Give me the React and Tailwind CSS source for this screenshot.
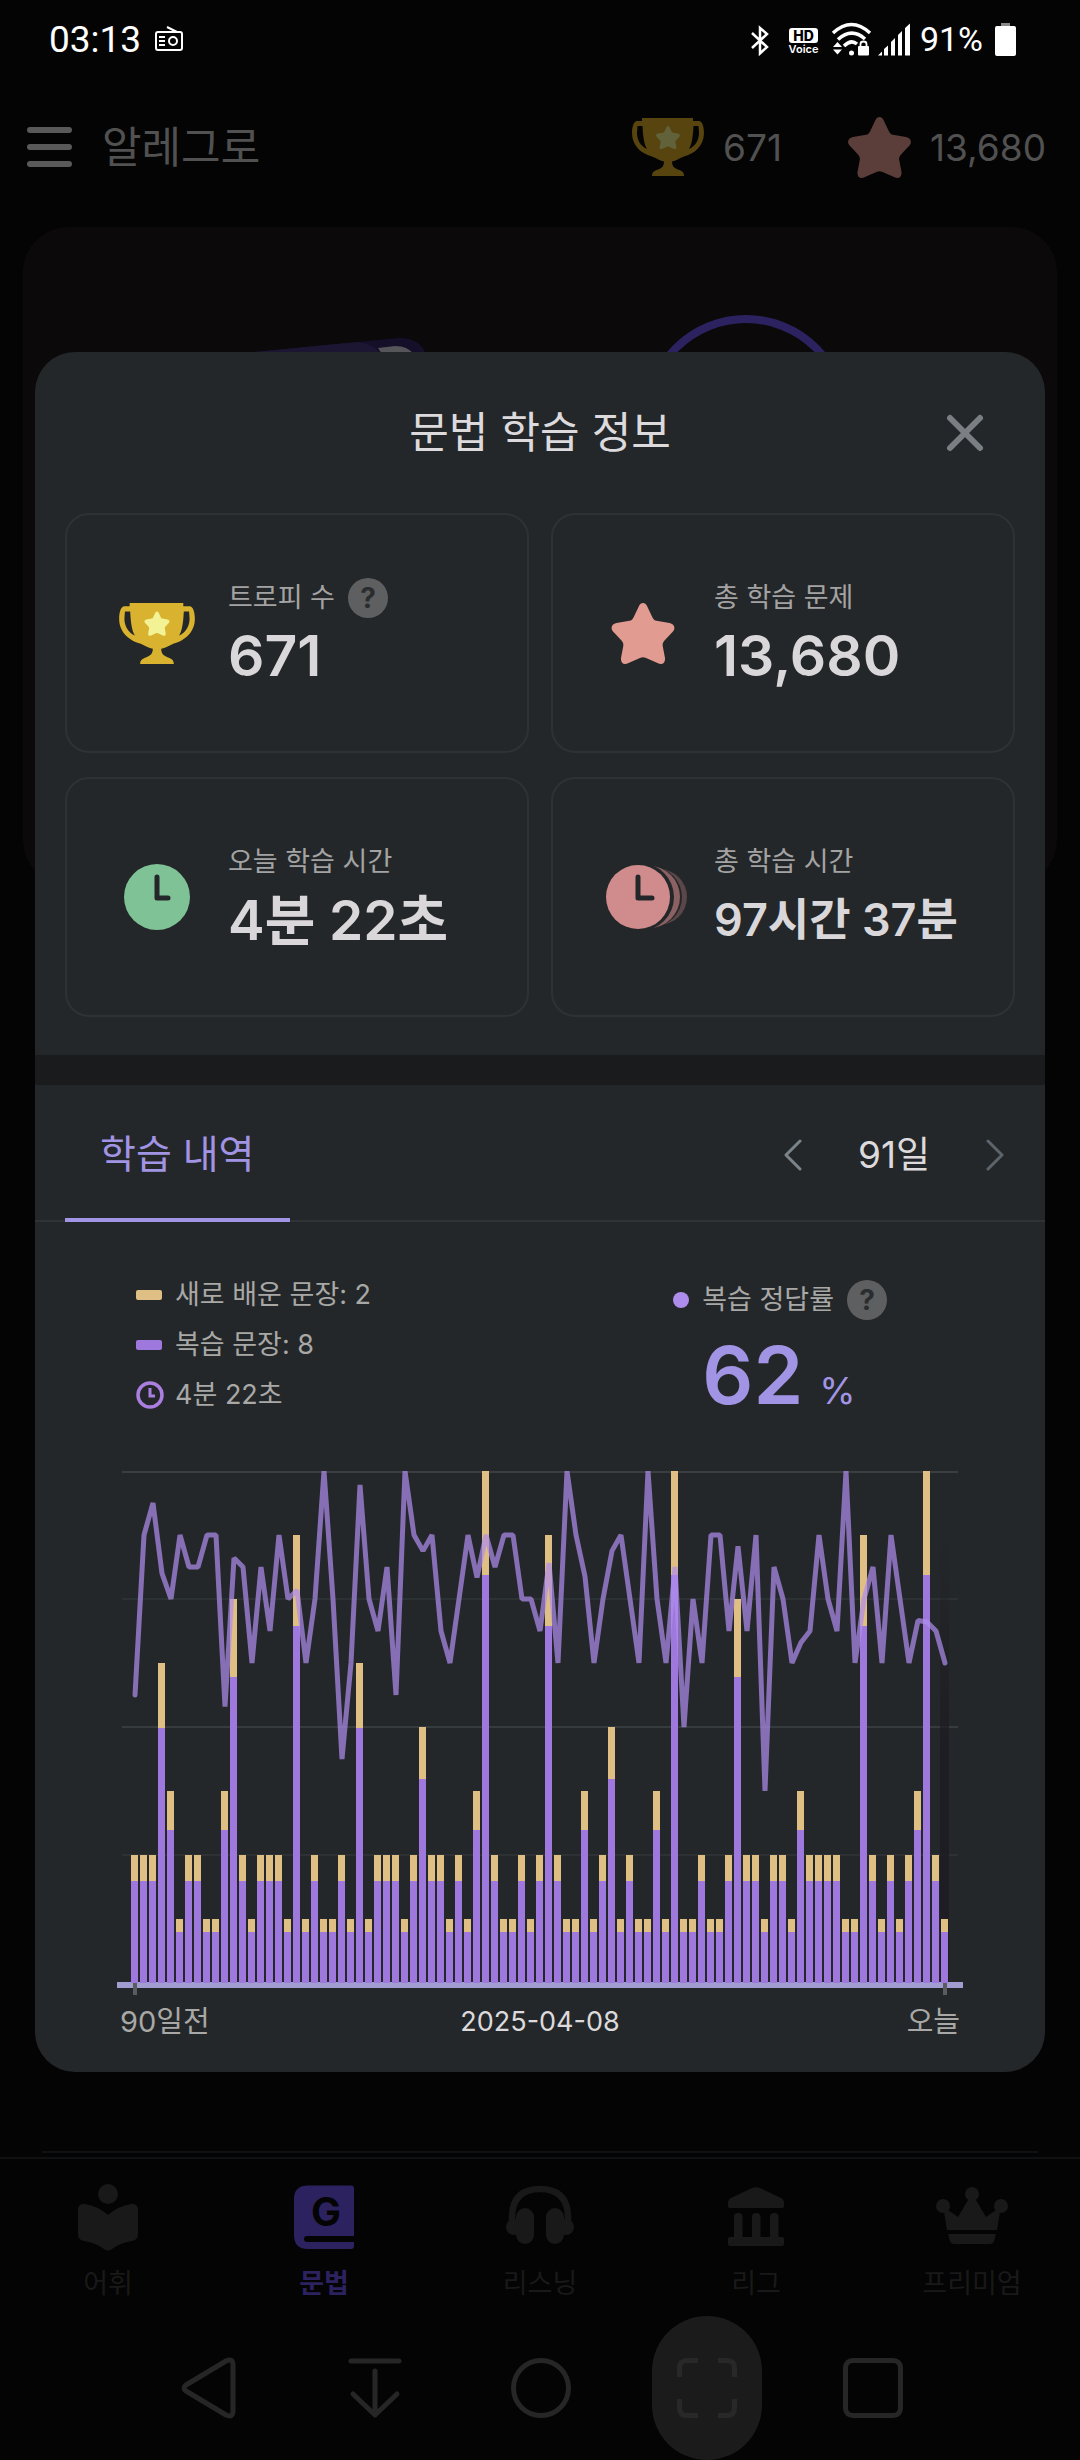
import React from "react";

const STAR =
  "M27.5 3C29 -1 34 -1 35.5 3L41 14.5C42 16.6 43 17.4 45 17.8L58 20C63 21 64.500 25.500 61 29L53 37.500C51.300 39.400 51 41 51.200 43L53.500 55C54 60 50.500 62.500 46 60L34 54.700C32 54 31 54 29 54.700L17 60C12.500 62.500 9 60 9.500 55L11.800 43C12 41 11.700 39.400 10 37.500L2 29C-1.500 25.500 0 21 5 20L18 17.800C20 17.400 21 16.600 22 14.500Z";

function Trophy({ className, color, star }) {
  return (
    <svg viewBox="0 0 72 58" className={className} aria-hidden="true">
      <path
        fill={color}
        fillRule="evenodd"
        d="M10 0H61V3H67C70 3 72 8 72 15C72 28 62 36 52 38.5C47 40.500 44 43 40 43.500C40 48 42 50 46 51.500C50 53 52 54 52 58H20C20 54 22 53 26 51.500C30 50 32 48 32 43.500C28 43 25 40.500 20 38.500C10 36 0 28 0 15C0 8 2 3 5 3H10Z M5.500 8H10.500C11 18 12 26 15 31C8 28 5 21 5 15Z M66.500 8H61.500C61 18 60 26 57 31C64 28 67 21 67 15Z"
      />
      <path fill={star} transform="translate(24 8) scale(.38)" d={STAR} />
    </svg>
  );
}

function Star({ className, color }) {
  return (
    <svg viewBox="0 0 63 61" className={className} aria-hidden="true">
      <path fill={color} d={STAR} />
    </svg>
  );
}

function TodayClock() {
  return (
    <svg viewBox="0 0 76 68" className="h-[68px] w-[76px]" aria-hidden="true">
      <circle cx="38" cy="34" r="33" fill="#7fc296" />
      <path d="M38 14V35H49" fill="none" stroke="#242729" strokeWidth="5" strokeLinecap="round" strokeLinejoin="round" />
    </svg>
  );
}

function TotalClock() {
  return (
    <svg viewBox="0 0 84 68" className="h-[68px] w-[84px] shrink-0" aria-hidden="true">
      <circle cx="54" cy="34" r="28" fill="#5b4649" />
      <circle cx="47" cy="34" r="30" fill="#242729" />
      <circle cx="44" cy="34" r="31" fill="#8b6163" />
      <circle cx="35" cy="34" r="34" fill="#242729" />
      <circle cx="33" cy="34" r="32" fill="#d08c8d" />
      <path d="M33 14V35H47" fill="none" stroke="#242729" strokeWidth="5" strokeLinecap="round" strokeLinejoin="round" />
    </svg>
  );
}

function Help({ label }) {
  return (
    <button
      aria-label={label}
      className="flex size-10 items-center justify-center rounded-full bg-[#5e5f60] text-[28px] leading-none font-bold text-[#2a2d2f]"
    >
      ?
    </button>
  );
}

function StatusBar() {
  return (
    <div className="flex h-[78px] items-center justify-between pr-16 pl-[49px] text-white">
      <div className="flex items-center gap-[14px]">
        <span className="font-[Roboto] text-[37px] leading-none">03:13</span>
        <svg viewBox="0 0 28 26" className="h-[26px] w-7" fill="none" stroke="white" strokeWidth="2" aria-hidden="true">
          <rect x="1" y="6" width="26" height="18" rx="2" />
          <path d="M12 1L22 6M4 11H10M4 15H10M4 19H10" />
          <circle cx="18" cy="15" r="4" />
        </svg>
      </div>
      <div className="flex items-center">
        <svg viewBox="750 20 162 35" className="h-[35px] w-[162px]" aria-hidden="true">
          <path d="M752 31L767 45L760 51.500V26L767 32L752 46" fill="none" stroke="white" strokeWidth="2.500" />
          <rect x="789" y="26" width="29" height="15" rx="3" fill="white" />
          <text x="803.500" y="38.500" textAnchor="middle" fontFamily="Inter" fontSize="14" fontWeight="800" fill="black">HD</text>
          <text x="803.500" y="51" textAnchor="middle" fontFamily="Inter" fontSize="11" fontWeight="600" fill="white">Voice</text>
          <g fill="none" stroke="white" strokeWidth="3.500">
            <path d="M833 31Q851.500 14 870 31" />
            <path d="M838 37.500Q851.500 25 865 37" />
            <path d="M844 44Q851 37 857 42" />
          </g>
          <circle cx="851.500" cy="51" r="2.500" fill="white" />
          <path d="M833 45L837.500 40L842 45ZM833 47.500L837.500 52.500L842 47.500Z" fill="white" />
          <rect x="858" y="44" width="11" height="9.500" rx="1" fill="white" />
          <path d="M860.500 45V42Q860.500 39.500 863.500 39.500Q866.500 39.500 866.500 42V45" fill="none" stroke="white" strokeWidth="1.800" />
          <path d="M878 53.500L882 49.500V53.500ZM884 53.500V47L888 43.500V53.500ZM891 53.500V40L895 36V53.500ZM898 53.500V33L902 29V53.500ZM905 53.500V26L910 21.500V53.500Z" fill="white" />
        </svg>
        <span className="ml-2 font-[Roboto] text-[34px] leading-none">91%</span>
        <svg viewBox="0 0 21 33" className="ml-3 h-[33px] w-[21px]" aria-hidden="true">
          <rect x="6" width="9" height="4" fill="#888" />
          <rect y="3" width="21" height="30" rx="2" fill="white" />
        </svg>
      </div>
    </div>
  );
}

function AppHeader() {
  return (
    <header className="flex h-[138px] items-center justify-between pr-[34px] pl-[27px] text-[#515151]">
      <div className="flex items-center gap-[30px]">
        <button aria-label="메뉴" className="flex w-[45px] flex-col gap-[11px]">
          <span className="h-[6px] rounded-full bg-[#595959]" />
          <span className="h-[6px] rounded-full bg-[#595959]" />
          <span className="h-[6px] rounded-full bg-[#595959]" />
        </button>
        <h1 className="text-[43px] leading-none">알레그로</h1>
      </div>
      <div className="flex items-center text-[37px] leading-none">
        <Trophy className="mr-[19px] h-[58px] w-[72px]" color="#57440f" star="#62623a" />
        <span>671</span>
        <Star className="mr-[19px] ml-[66px] h-[61px] w-[63px]" color="#5b3e3a" />
        <span>13,680</span>
      </div>
    </header>
  );
}

function Hero() {
  return (
    <section className="mx-[23px] mt-[11px] h-[658px] rounded-[45px] bg-[#0b090a]">
      <svg viewBox="0 0 1034 658" className="h-full w-full" aria-hidden="true">
        <path d="M200 128L375 111Q398 110 404 130V160H200Z" fill="#150f2a" />
        <path d="M200 128L335 115Q352 117 358 128V160H200Z" fill="#1d1633" />
        <path d="M355 121L372 119Q385 119 390 127H359Z" fill="#55555a" />
        <circle cx="723" cy="191" r="99" fill="none" stroke="#2d2260" strokeWidth="8" />
      </svg>
    </section>
  );
}

const VALUE_SIZE = {
  lg: "text-[57px]",
  md: "text-[55px]",
  sm: "text-[45px]",
};

function StatCard({ icon, label, help, value, size }) {
  return (
    <div className="flex h-[240px] items-center rounded-3xl border-2 border-[#2f3235] pl-[52px]">
      <div className="flex w-[109px] shrink-0 items-center">{icon}</div>
      <div className="pt-1">
        <div className="flex h-[38px] items-center gap-[13px] text-[27px] text-[#a3a3a3]">
          <span>{label}</span>
          {help && <Help label="트로피 수 도움말" />}
        </div>
        <div className={VALUE_SIZE[size]}>
          <p className="mt-1 leading-[70px] font-semibold whitespace-nowrap text-[#d9d7d9]">{value}</p>
        </div>
      </div>
    </div>
  );
}

const LEVELS = [
  2, 2, 2, 5, 3, 1, 2, 2, 1, 1, 3, 6, 2, 1, 2, 2, 2, 1, 7, 1, 2, 1, 1, 2, 1, 5, 1, 2, 2, 2, 1, 2, 4, 2, 2, 1, 2, 1, 3,
  8, 2, 1, 1, 2, 1, 2, 7, 2, 1, 1, 3, 1, 2, 4, 1, 2, 1, 1, 3, 1, 8, 1, 1, 2, 1, 1, 2, 6, 2, 2, 1, 2, 2, 1, 3, 2, 2, 2,
  2, 1, 1, 7, 2, 1, 2, 1, 2, 3, 8, 2, 1,
];

const ACCURACY = [
  56.25, 87.5, 93.75, 80, 75, 87.5, 81.25, 81.25, 87.5, 87.5, 54, 83, 81.25, 62.5, 81.25, 68.75, 87.5, 75, 76.7, 62.5,
  75, 100, 75, 43.75, 62.5, 97.3, 75, 68.75, 81.25, 56.25, 100, 87.5, 84.4, 87.5, 68.75, 62.5, 75, 87.5, 79.2, 87.5,
  81.25, 87.5, 87.5, 75, 75, 68.75, 82, 62.5, 100, 87.5, 79.4, 62.5, 75, 84.4, 87.5, 75, 62.5, 100, 75, 62.5, 81.25, 50,
  75, 62.5, 87.5, 87.5, 68.75, 85.3, 68.75, 87.5, 37.5, 81.25, 75, 62.5, 66.5, 68.75, 87.5, 75, 68.75, 100, 62.5, 75,
  81.25, 62.5, 87.5, 75, 62.5, 70.8, 70.5, 68.75, 62.5,
];

const CHART_BASE = 512;

function Chart() {
  const points = ACCURACY.map((v, i) => `${18 + i * 9},${CHART_BASE - v * 5.12}`).join(" ");
  return (
    <svg viewBox="0 0 846 524" className="block w-full" role="img" aria-label="학습 내역 차트">
      <defs>
        <linearGradient id="today" x1="0" y1="0" x2="0" y2="1">
          <stop offset="0" stopColor="#1c1a21" stopOpacity="0" />
          <stop offset="0.500" stopColor="#1c1a21" stopOpacity="0.800" />
          <stop offset="1" stopColor="#1c1a21" stopOpacity="0.800" />
        </linearGradient>
      </defs>
      <rect x="5" y="0" width="836" height="2" fill="#3b3e40" />
      <rect x="5" y="127" width="836" height="2" fill="#2c3133" />
      <rect x="5" y="255" width="836" height="2" fill="#363b3d" />
      <rect x="5" y="383" width="836" height="2" fill="#2e3133" />
      <rect x="823" y="60" width="9" height="452" fill="url(#today)" />
      <rect x="0" y="511" width="846" height="6" fill="#a19dd0" />
      {LEVELS.map((n, i) => (
        <g key={i}>
          <rect x={14 + i * 9} y={CHART_BASE - n * 64} width="7" height={n * 13} fill="#dfbf83" />
          <rect x={14 + i * 9} y={CHART_BASE - n * 51} width="7" height={n * 51} fill="#9f78de" />
        </g>
      ))}
      <polyline points={points} fill="none" stroke="#af8ded" strokeOpacity="0.710" strokeWidth="5" strokeLinejoin="bevel" strokeLinecap="round" />
      <rect x="16" y="512" width="4" height="12" fill="#5a5b5e" />
      <rect x="826" y="512" width="4" height="12" fill="#5a5b5e" />
    </svg>
  );
}

function Chevron({ d, className }) {
  return (
    <svg viewBox="0 0 18 32" className={className} fill="none" strokeWidth="3" strokeLinecap="round" strokeLinejoin="round" aria-hidden="true">
      <path stroke="currentColor" d={d} />
    </svg>
  );
}

function StudyDialog() {
  return (
    <div role="dialog" aria-labelledby="dialog-title" className="overflow-hidden rounded-[40px] bg-[#242729]">
      <div className="relative flex h-[161px] items-center justify-center">
        <h2 id="dialog-title" className="text-[43px] leading-none text-[#dcdadc]">문법 학습 정보</h2>
        <button aria-label="닫기" className="absolute right-[60px]">
          <svg viewBox="0 0 40 40" className="size-10" aria-hidden="true">
            <path d="M5 5L35 35M35 5L5 35" stroke="#7a7f83" strokeWidth="6" strokeLinecap="round" />
          </svg>
        </button>
      </div>

      <div className="grid grid-cols-2 gap-x-[22px] gap-y-6 px-[30px] pb-[38px]">
        <StatCard icon={<Trophy className="h-[61px] w-[76px]" color="#d9b22f" star="#f3f294" />} label="트로피 수" help value="671" size="lg" />
        <StatCard icon={<Star className="ml-[6px] h-[61px] w-[64px]" color="#e29b90" />} label="총 학습 문제" value="13,680" size="lg" />
        <StatCard icon={<TodayClock />} label="오늘 학습 시간" value="4분 22초" size="md" />
        <StatCard icon={<TotalClock />} label="총 학습 시간" value="97시간 37분" size="sm" />
      </div>

      <div className="h-[30px] bg-[#1a1b1d]" />

      <div className="flex h-[137px] items-stretch justify-between border-b-2 border-[#303336] pr-[41px] pl-[30px]">
        <button className="-mb-[2px] border-b-4 border-[#a294e4] px-[35px] pt-[6px] text-[39px] text-[#a294e4]">학습 내역</button>
        <div className="flex items-center gap-[56px] pt-1 text-[37px] text-[#dcdadc]">
          <button aria-label="이전 기간" className="text-[#7a848a]">
            <Chevron d="M16 2L2 16L16 30" className="h-8 w-[18px]" />
          </button>
          <span>91일</span>
          <button aria-label="다음 기간" className="text-[#5b646a]">
            <Chevron d="M2 2L16 16L2 30" className="h-8 w-[18px]" />
          </button>
        </div>
      </div>

      <div className="flex justify-between pt-12 pr-[158px] pl-[101px] text-[27px] text-[#a8a8a6]">
        <ul className="leading-[50px]">
          <li className="flex items-center gap-[13px]">
            <span className="h-[10px] w-[26px] rounded-[2px] bg-[#dfbf83]" />
            새로 배운 문장: 2
          </li>
          <li className="flex items-center gap-[13px]">
            <span className="h-[10px] w-[26px] rounded-[2px] bg-[#9f78de]" />
            복습 문장: 8
          </li>
          <li className="flex items-center gap-[11px]">
            <svg viewBox="0 0 28 28" className="size-7" fill="none" stroke="#aa7fe0" strokeWidth="3.500" aria-hidden="true">
              <circle cx="14" cy="14" r="12" />
              <path d="M14 7V15H19" strokeWidth="3" />
            </svg>
            4분 22초
          </li>
        </ul>
        <div className="pt-[10px]">
          <div className="flex h-[40px] items-center gap-[13px]">
            <span className="size-4 rounded-full bg-[#ad8cec]" />
            <span>복습 정답률</span>
            <Help label="복습 정답률 도움말" />
          </div>
          <div className="flex h-[108px] items-baseline gap-4 pl-[29px] leading-[110px] text-[#a294e4]">
            <span className="text-[80px] font-semibold">62</span>
            <span className="text-[37px]">%</span>
          </div>
        </div>
      </div>

      <div className="mt-[43px] px-[82px] pb-[23px]">
        <Chart />
        <div className="flex h-[54px] items-center justify-between px-[3px] text-[29px] text-[#a8a8a6]">
          <span className="w-1/3">90일전</span>
          <span className="text-[27px] text-[#dcdadc]">2025-04-08</span>
          <span className="w-1/3 text-right">오늘</span>
        </div>
      </div>
    </div>
  );
}

function NavIcon({ children }) {
  return (
    <svg viewBox="0 0 72 68" className="h-[68px] w-[72px]" fill="currentColor" aria-hidden="true">
      {children}
    </svg>
  );
}

const TABS = [
  {
    label: "어휘",
    icon: (
      <>
        <circle cx="36" cy="11" r="10" />
        <path d="M6 27Q6 20 13 21Q26 23 36 32Q46 23 59 21Q66 20 66 27V51Q66 57 60 58Q48 60 40 66Q36 69 32 66Q24 60 12 58Q6 57 6 51Z" />
      </>
    ),
  },
  {
    label: "문법",
    active: true,
    icon: (
      <>
        <path d="M20 2.500H63Q66 2.500 66 5.500V53H19Q16 53 16 56Q16 59 19 59H66V63Q66 66 63 66H20Q6 66 6 52V16Q6 2.500 20 2.500Z" />
        <text x="38" y="43" textAnchor="middle" fontFamily="Inter" fontWeight="700" fontSize="40" fill="#040404">G</text>
      </>
    ),
  },
  {
    label: "리스닝",
    icon: (
      <>
        <path d="M8 42V33Q9 6 36 6Q63 6 64 33V42" fill="none" stroke="currentColor" strokeWidth="6.500" />
        <rect x="12" y="25" width="18" height="36" rx="9" />
        <rect x="42" y="25" width="18" height="36" rx="9" />
        <rect x="2" y="36" width="16" height="16" rx="8" />
        <rect x="54" y="36" width="16" height="16" rx="8" />
      </>
    ),
  },
  {
    label: "리그",
    icon: (
      <>
        <path d="M8 21V19Q8 17 11 15L32 5Q36 3.500 40 5L61 15Q64 17 64 19V23Q64 25 62 25H10Q8 25 8 23Z" />
        <rect x="14" y="30" width="8.500" height="28" rx="4" />
        <rect x="32" y="30" width="8.500" height="28" rx="4" />
        <rect x="50" y="30" width="8.500" height="28" rx="4" />
        <rect x="8" y="54" width="56" height="9" rx="2" />
      </>
    ),
  },
  {
    label: "프리미엄",
    icon: (
      <>
        <circle cx="36" cy="11" r="7" />
        <circle cx="7" cy="23" r="7" />
        <circle cx="65" cy="23" r="7" />
        <path d="M12 27L22 34L32 17H40L50 34L60 27L64 29L61 47H11L8 29Z" />
        <path d="M12 51H60L58 58Q57 61 54 61H18Q15 61 14 58Z" />
      </>
    ),
  },
];

function BottomNav() {
  return (
    <nav className="grid h-[159px] grid-cols-5 border-t-2 border-[#0f1112] pt-6">
      {TABS.map((t) => (
        <a
          key={t.label}
          href="#"
          className={
            t.active
              ? "flex flex-col items-center text-[27px] font-bold text-[#2d2260]"
              : "flex flex-col items-center text-[27px] text-[#191919]"
          }
        >
          <NavIcon>{t.icon}</NavIcon>
          <span className="mt-[15px] leading-9">{t.label}</span>
        </a>
      ))}
    </nav>
  );
}

function SystemButton({ label, highlighted, children }) {
  return (
    <button
      aria-label={label}
      className={
        highlighted
          ? "flex h-36 w-[110px] items-center justify-center justify-self-center rounded-full bg-[#1b1b1b]"
          : "flex h-36 w-[110px] items-center justify-center justify-self-center"
      }
    >
      <svg viewBox="0 0 64 64" className="size-16" fill="none" stroke="#262626" strokeWidth="5" strokeLinecap="round" strokeLinejoin="round" aria-hidden="true">
        {children}
      </svg>
    </button>
  );
}

function SystemNav() {
  return (
    <div className="grid grid-cols-5 pr-[124px] pl-[126px]">
      <SystemButton label="뒤로">
        <path d="M49 5Q56 2 56 9V55Q56 62 49 59L9 35Q5 32 9 29Z" />
      </SystemButton>
      <SystemButton label="알림창 내리기">
        <path d="M8 5H56M32 15V59M10 38L32 59L54 38" />
      </SystemButton>
      <SystemButton label="홈">
        <circle cx="32" cy="32" r="27.500" />
      </SystemButton>
      <SystemButton label="화면 캡처" highlighted>
        <g stroke="#282828" strokeLinecap="butt">
          <path d="M4.500 21V12Q4.500 4.500 12 4.500H23M43 4.500H52Q59.500 4.500 59.500 12V21M4.500 43V52Q4.500 59.500 12 59.500H23M43 59.500H52Q59.500 59.500 59.500 52V43" />
        </g>
      </SystemButton>
      <SystemButton label="최근 앱">
        <rect x="4.500" y="4.500" width="55" height="55" rx="7" />
      </SystemButton>
    </div>
  );
}

export default function App() {
  return (
    <div className="relative flex min-h-screen flex-col bg-[#040404] font-[Inter,'Noto_Sans_CJK_KR',sans-serif]">
      <StatusBar />
      <AppHeader />
      <Hero />
      <div className="mx-[42px] mb-1 min-h-[600px] flex-1 border-b-2 border-[#0f1112]" />
      <BottomNav />
      <SystemNav />
      <div className="absolute inset-x-0 top-[352px] px-[35px]">
        <StudyDialog />
      </div>
    </div>
  );
}
